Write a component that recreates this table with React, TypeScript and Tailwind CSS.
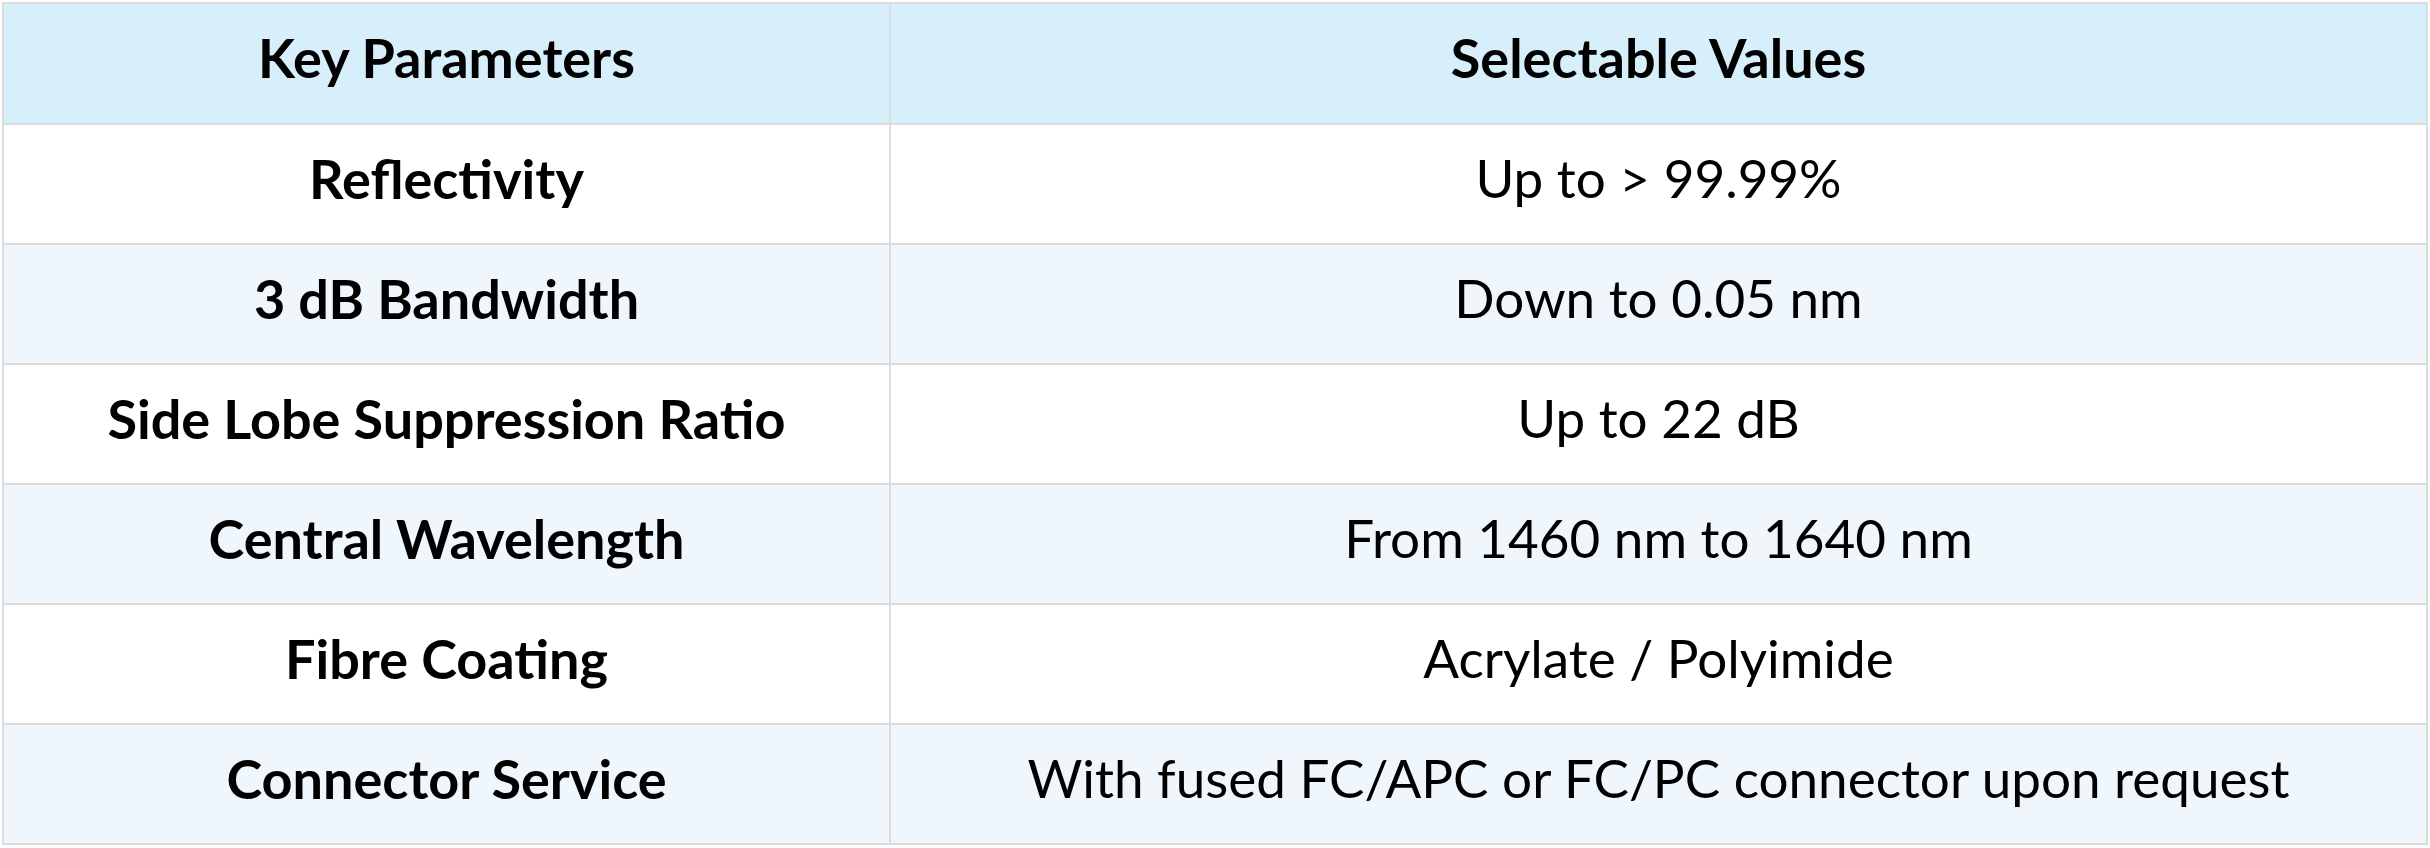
const ROWS = [
  ["Reflectivity", "Up to > 99.99%"],
  ["3 dB Bandwidth", "Down to 0.05 nm"],
  ["Side Lobe Suppression Ratio", "Up to 22 dB"],
  ["Central Wavelength", "From 1460 nm to 1640 nm"],
  ["Fibre Coating", "Acrylate / Polyimide"],
  ["Connector Service", "With fused FC/APC or FC/PC connector upon request"],
];

export default function App() {
  return (
    <div className="w-[2430px] h-[848px] bg-white p-[2px] font-['Lato',sans-serif] text-black">
      <table className="w-full border-collapse table-fixed">
        <colgroup>
          <col className="w-[887px]" />
          <col />
        </colgroup>
        <thead>
          <tr className="h-[121px] bg-[#d7eefb]">
            <th className="border-2 border-[#dcdcdc] pb-[12px] text-[54px] font-bold">Key Parameters</th>
            <th className="border-2 border-[#dcdcdc] pb-[12px] text-[54px] font-bold">Selectable Values</th>
          </tr>
        </thead>
        <tbody>
          {ROWS.map(([k, v], i) => (
            <tr key={k} className={`h-[120px] ${i % 2 === 1 ? "bg-[#eff7fd]" : "bg-white"}`}>
              <td className="border-2 border-[#dcdcdc] pb-[12px] text-center text-[54px] font-bold">{k}</td>
              <td className="border-2 border-[#dcdcdc] pb-[12px] text-center text-[53px]">{v}</td>
            </tr>
          ))}
        </tbody>
      </table>
    </div>
  );
}
